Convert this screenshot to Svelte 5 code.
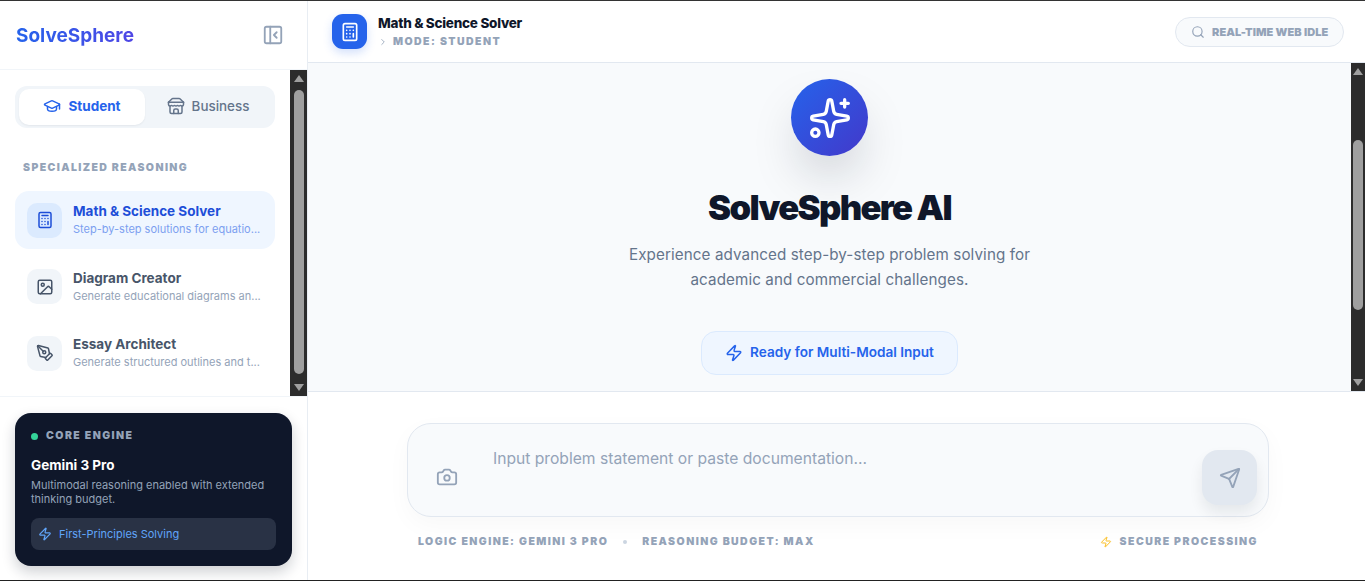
<script>
    const tools = [
        { name: "Math & Science Solver", desc: "Step-by-step solutions for equatio...", icon: "calc", active: true },
        { name: "Diagram Creator", desc: "Generate educational diagrams an...", icon: "image" },
        { name: "Essay Architect", desc: "Generate structured outlines and t...", icon: "pen" }
    ];
</script>

{#snippet calc()}
    <rect x="4" y="2" width="16" height="20" rx="2" />
    <path d="M8 6h8M16 14v4M16 10h.01M12 10h.01M8 10h.01M12 14h.01M8 14h.01M12 18h.01M8 18h.01" />
{/snippet}

{#snippet zap()}
    <path d="M4 14a1 1 0 0 1-.78-1.63l9.9-10.2a.5.5 0 0 1 .86.46l-1.92 6.02A1 1 0 0 0 13 10h7a1 1 0 0 1 .78 1.63l-9.9 10.2a.5.5 0 0 1-.86-.46l1.92-6.02A1 1 0 0 0 11 14z" />
{/snippet}

<div class="shell">
    <aside class="sidebar">
        <div class="brand">
            <span class="logo">SolveSphere</span>
            <svg class="ico collapse" viewBox="0 0 24 24">
                <rect x="3" y="3" width="18" height="18" rx="2" />
                <path d="M9 3v18M16 15l-3-3 3-3" />
            </svg>
        </div>

        <div class="nav-wrap">
            <nav class="nav">
                <div class="switch">
                    <button class="tab on">
                        <svg class="ico s18" viewBox="0 0 24 24">
                            <path d="M21.42 10.922a1 1 0 0 0-.019-1.838L12.83 5.18a2 2 0 0 0-1.66 0L2.6 9.08a1 1 0 0 0 0 1.832l8.57 3.908a2 2 0 0 0 1.66 0z" />
                            <path d="M22 10v6M6 12.5V16a6 3 0 0 0 12 0v-3.5" />
                        </svg>
                        Student
                    </button>
                    <button class="tab">
                        <svg class="ico s18" viewBox="0 0 24 24">
                            <path d="m2 7 4.41-4.41A2 2 0 0 1 7.83 2h8.34a2 2 0 0 1 1.42.59L22 7" />
                            <path d="M4 12v8a2 2 0 0 0 2 2h12a2 2 0 0 0 2-2v-8" />
                            <path d="M15 22v-4a2 2 0 0 0-2-2h-2a2 2 0 0 0-2 2v4" />
                            <path d="M2 7h20" />
                            <path d="M22 7v3a2 2 0 0 1-2 2a2.7 2.7 0 0 1-1.59-.63.7.7 0 0 0-.82 0A2.7 2.7 0 0 1 16 12a2.7 2.7 0 0 1-1.59-.63.7.7 0 0 0-.82 0A2.7 2.7 0 0 1 12 12a2.7 2.7 0 0 1-1.59-.63.7.7 0 0 0-.82 0A2.7 2.7 0 0 1 8 12a2.7 2.7 0 0 1-1.59-.63.7.7 0 0 0-.82 0A2.7 2.7 0 0 1 4 12a2 2 0 0 1-2-2V7" />
                        </svg>
                        Business
                    </button>
                </div>

                <h3 class="section">SPECIALIZED REASONING</h3>

                <ul class="tools">
                    {#each tools as t}
                        <li class="tool" class:active={t.active}>
                            <span class="tool-icon">
                                <svg class="ico s18" viewBox="0 0 24 24">
                                    {#if t.icon === "calc"}
                                        {@render calc()}
                                    {:else if t.icon === "image"}
                                        <rect x="3" y="3" width="18" height="18" rx="2" />
                                        <circle cx="9" cy="9" r="2" />
                                        <path d="m21 15-3.086-3.086a2 2 0 0 0-2.828 0L6 21" />
                                    {:else}
                                        <path d="M15.707 21.293a1 1 0 0 1-1.414 0l-1.586-1.586a1 1 0 0 1 0-1.414l5.586-5.586a1 1 0 0 1 1.414 0l1.586 1.586a1 1 0 0 1 0 1.414z" />
                                        <path d="m18 13-1.375-6.874a1 1 0 0 0-.746-.776L3.235 2.028a1 1 0 0 0-1.207 1.207L5.35 15.879a1 1 0 0 0 .776.746L13 18" />
                                        <path d="m2.3 2.3 7.286 7.286" />
                                        <circle cx="11" cy="11" r="2" />
                                    {/if}
                                </svg>
                            </span>
                            <span class="tool-text">
                                <b>{t.name}</b>
                                <small>{t.desc}</small>
                            </span>
                        </li>
                    {/each}
                </ul>
            </nav>

            <div class="scrollbar side-bar">
                <i class="arrow up"></i>
                <span class="track"><span class="thumb"></span></span>
                <i class="arrow down"></i>
            </div>
        </div>

        <div class="engine-wrap">
            <div class="engine">
                <div class="engine-head"><i class="dot"></i>CORE ENGINE</div>
                <div class="engine-name">Gemini 3 Pro</div>
                <p>Multimodal reasoning enabled with extended thinking budget.</p>
                <div class="engine-chip">
                    <svg class="ico s14" viewBox="0 0 24 24">{@render zap()}</svg>
                    First-Principles Solving
                </div>
            </div>
        </div>
    </aside>

    <main class="main">
        <header class="top">
            <div class="top-left">
                <span class="top-icon">
                    <svg class="ico s20" viewBox="0 0 24 24">{@render calc()}</svg>
                </span>
                <div class="top-text">
                    <div class="top-title">Math &amp; Science Solver</div>
                    <div class="top-mode">
                        <svg class="ico s10" viewBox="0 0 24 24"><path d="m9 18 6-6-6-6" /></svg>
                        MODE: STUDENT
                    </div>
                </div>
            </div>
            <div class="pill">
                <svg class="ico s14" viewBox="0 0 24 24">
                    <path d="m21 21-4.34-4.34" />
                    <circle cx="11" cy="11" r="8" />
                </svg>
                <span>REAL-TIME WEB IDLE</span>
            </div>
        </header>

        <div class="stage">
            <section class="hero">
                <div class="orb">
                    <svg class="ico" viewBox="0 0 24 24">
                        <path d="M11.017 2.814a1 1 0 0 1 1.966 0l1.051 5.558a2 2 0 0 0 1.594 1.594l5.558 1.051a1 1 0 0 1 0 1.966l-5.558 1.051a2 2 0 0 0-1.594 1.594l-1.051 5.558a1 1 0 0 1-1.966 0l-1.051-5.558a2 2 0 0 0-1.594-1.594l-5.558-1.051a1 1 0 0 1 0-1.966l5.558-1.051a2 2 0 0 0 1.594-1.594z" />
                        <path d="M20 2v4M22 4h-4" />
                        <circle cx="4" cy="20" r="2" />
                    </svg>
                </div>
                <h1>SolveSphere AI</h1>
                <p class="lead">Experience advanced step-by-step problem solving for academic and commercial challenges.</p>
                <div class="ready">
                    <svg class="ico s18" viewBox="0 0 24 24">{@render zap()}</svg>
                    <span>Ready for Multi-Modal Input</span>
                </div>
            </section>

            <div class="scrollbar main-bar">
                <i class="arrow up"></i>
                <span class="track"><span class="thumb"></span></span>
                <i class="arrow down"></i>
            </div>
        </div>

        <footer class="composer">
            <div class="box">
                <svg class="ico camera" viewBox="0 0 24 24">
                    <path d="M13.997 4a2 2 0 0 1 1.76 1.05l.486.9A2 2 0 0 0 18.003 7H20a2 2 0 0 1 2 2v9a2 2 0 0 1-2 2H4a2 2 0 0 1-2-2V9a2 2 0 0 1 2-2h1.997a2 2 0 0 0 1.759-1.048l.489-.904A2 2 0 0 1 10.004 4z" />
                    <circle cx="12" cy="13" r="3" />
                </svg>
                <div class="placeholder">Input problem statement or paste documentation...</div>
                <button class="send" aria-label="Send">
                    <svg class="ico s22" viewBox="0 0 24 24">
                        <path d="M14.536 21.686a.5.5 0 0 0 .937-.024l6.5-19a.496.496 0 0 0-.635-.635l-19 6.5a.5.5 0 0 0-.024.937l7.93 3.18a2 2 0 0 1 1.112 1.11z" />
                        <path d="m21.854 2.147-10.94 10.939" />
                    </svg>
                </button>
            </div>
            <div class="meta">
                <div class="meta-left">
                    <span>LOGIC ENGINE: GEMINI 3 PRO</span>
                    <i class="sep"></i>
                    <span>REASONING BUDGET: MAX</span>
                </div>
                <div class="meta-right">
                    <svg class="ico s12" viewBox="0 0 24 24">{@render zap()}</svg>
                    <span>SECURE PROCESSING</span>
                </div>
            </div>
        </footer>
    </main>
</div>

<style>
    :global(body) {
        margin: 0;
        overflow: hidden;
    }

    .shell {
        display: flex;
        box-sizing: border-box;
        width: 1365px;
        height: 581px;
        border-top: 1px solid #333;
        border-bottom: 1px solid #222;
        background: #fff;
        font-family: Inter, "Liberation Sans", sans-serif;
        overflow: hidden;
    }

    .ico {
        flex: none;
        fill: none;
        stroke: currentColor;
        stroke-width: 2;
        stroke-linecap: round;
        stroke-linejoin: round;
    }
    .s10 { width: 10px; height: 10px; }
    .s12 { width: 12px; height: 12px; }
    .s14 { width: 14px; height: 14px; }
    .s18 { width: 18px; height: 18px; }
    .s20 { width: 20px; height: 20px; }
    .s22 { width: 22px; height: 22px; }

    /* sidebar */
    .sidebar {
        flex: none;
        display: flex;
        flex-direction: column;
        width: 308px;
        box-sizing: border-box;
        border-right: 1px solid #e8edf3;
    }

    .brand {
        flex: none;
        display: flex;
        align-items: center;
        justify-content: space-between;
        box-sizing: border-box;
        height: 69px;
        padding: 0 23px 0 16px;
        border-bottom: 1px solid #f1f5f9;
    }

    .logo {
        font-size: 19px;
        font-weight: 700;
        background: linear-gradient(90deg, #2563eb, #4f46e5);
        background-clip: text;
        -webkit-background-clip: text;
        color: transparent;
    }

    .collapse {
        width: 22px;
        height: 22px;
        color: #94a3b8;
    }

    .nav-wrap {
        flex: none;
        display: flex;
        height: 327px;
        overflow: hidden;
        border-bottom: 1px solid #f1f5f9;
        box-sizing: border-box;
    }

    .nav {
        flex: 1;
        min-width: 0;
        padding: 16px 15px 0;
    }

    .switch {
        display: flex;
        box-sizing: border-box;
        height: 42px;
        padding: 3px 4px;
        border-radius: 12px;
        background: #f1f5f9;
    }

    .tab {
        flex: 1;
        display: flex;
        align-items: center;
        justify-content: center;
        gap: 7px;
        padding: 0 0 2px;
        border: 0;
        border-radius: 10px;
        background: transparent;
        color: #64748b;
        font: 500 13.4px Inter, sans-serif;
    }

    .tab.on {
        flex: none;
        width: 126px;
        background: #fff;
        color: #2563eb;
        font-size: 13.5px;
        font-weight: 700;
        box-shadow: 0 1px 2px rgba(15, 23, 42, 0.06);
    }

    .section {
        margin: 33px 0 17px 8px;
        color: #94a3b8;
        font-size: 10.5px;
        line-height: 14px;
        font-weight: 900;
        letter-spacing: 1.4px;
    }

    .tools {
        list-style: none;
        margin: -1px 0 0;
        padding: 0;
        display: flex;
        flex-direction: column;
        gap: 8.5px;
    }

    .tool {
        display: flex;
        align-items: center;
        gap: 11px;
        box-sizing: border-box;
        height: 58px;
        padding: 0 12px;
        border-radius: 14px;
    }

    .tool.active {
        background: #eff6ff;
    }

    .tool-icon {
        flex: none;
        display: flex;
        align-items: center;
        justify-content: center;
        width: 35px;
        height: 35px;
        border-radius: 10px;
        background: #f1f5f9;
        color: #475569;
    }

    .active .tool-icon {
        background: #dbeafe;
        color: #1d4ed8;
    }

    .tool-text {
        flex: 1;
        min-width: 0;
        display: flex;
        flex-direction: column;
        gap: 2px;
    }

    .tool-text b {
        color: #475569;
        font-size: 13.5px;
        line-height: 17px;
        font-weight: 700;
        white-space: nowrap;
    }

    .tool-text small {
        color: #94a3b8;
        font-size: 11px;
        line-height: 15px;
        white-space: nowrap;
    }

    .active .tool-text b { color: #1d4ed8; }
    .active .tool-text small { color: #7c9ff0; }

    /* fake classic scrollbars */
    .scrollbar {
        flex: none;
        display: flex;
        flex-direction: column;
        align-items: center;
        background: #2c2c2c;
    }

    .side-bar { width: 17px; }
    .main-bar { width: 14px; }

    .track {
        flex: 1;
        display: flex;
        width: 100%;
        justify-content: center;
    }

    .thumb {
        width: 10px;
        border-radius: 5px;
        background: #9f9f9f;
    }

    .side-bar .track { padding: 8px 0 0; }
    .side-bar .thumb { height: 284px; }
    .main-bar .track { padding: 65px 0 0; }
    .main-bar .thumb { height: 170px; }

    .arrow {
        flex: none;
        width: 0;
        height: 0;
        border-left: 5.5px solid transparent;
        border-right: 5.5px solid transparent;
    }

    .arrow.up {
        margin-top: 5px;
        border-bottom: 7px solid #9f9f9f;
    }

    .arrow.down {
        margin-bottom: 5px;
        border-top: 7px solid #9f9f9f;
    }

    /* engine card */
    .engine-wrap {
        flex: 1;
        padding: 16px 15px 0;
    }

    .engine {
        box-sizing: border-box;
        width: 277px;
        height: 153px;
        padding: 16px;
        border-radius: 16px;
        background: #0f172a;
        box-shadow: 0 6px 14px rgba(15, 23, 42, 0.2);
    }

    .engine-head {
        display: flex;
        align-items: center;
        gap: 8px;
        color: #94a3b8;
        font-size: 10.5px;
        line-height: 14px;
        font-weight: 900;
        letter-spacing: 1.45px;
        padding-top: 0;
    }

    .dot {
        width: 7px;
        height: 7px;
        border-radius: 50%;
        background: #34d399;
    }

    .engine-name {
        margin-top: 13px;
        color: #fff;
        font-size: 13.5px;
        line-height: 18px;
        font-weight: 700;
    }

    .engine p {
        margin: 4px 0 0;
        color: #94a3b8;
        font-size: 11px;
        line-height: 14px;
    }

    .engine-chip {
        display: flex;
        align-items: center;
        gap: 7px;
        box-sizing: border-box;
        height: 32px;
        margin-top: 12px;
        padding: 0 7px;
        border-radius: 8px;
        background: #293245;
        color: #60a5fa;
        font-size: 11px;
    }

    /* main */
    .main {
        flex: 1;
        min-width: 0;
        display: flex;
        flex-direction: column;
    }

    .top {
        flex: none;
        display: flex;
        align-items: center;
        justify-content: space-between;
        box-sizing: border-box;
        height: 62px;
        padding: 0 21px 0 24px;
        border-bottom: 1px solid #e2e8f0;
    }

    .top-left {
        display: flex;
        align-items: center;
        gap: 11px;
    }

    .top-icon {
        display: flex;
        align-items: center;
        justify-content: center;
        width: 35px;
        height: 35px;
        border-radius: 11px;
        background: #2563eb;
        color: #fff;
        box-shadow: 0 4px 10px rgba(37, 99, 235, 0.2);
    }

    .top-title {
        color: #0f172a;
        font-size: 13.5px;
        line-height: 18px;
        font-weight: 800;
        letter-spacing: -0.25px;
        margin-top: -1px;
    }

    .top-mode {
        display: flex;
        align-items: center;
        gap: 5px;
        margin-top: 3px;
        color: #94a3b8;
        font-size: 10.5px;
        line-height: 14px;
        font-weight: 900;
        letter-spacing: 1.45px;
    }

    .pill {
        display: flex;
        align-items: center;
        gap: 7px;
        box-sizing: border-box;
        width: 169px;
        height: 30px;
        padding: 0 15px;
        border: 1px solid #e2e8f0;
        border-radius: 15px;
        background: #f8fafc;
        color: #94a3b8;
        font-size: 11px;
        font-weight: 900;
        letter-spacing: 0.05px;
        white-space: nowrap;
    }

    .pill span {
        padding-top: 1px;
    }

    .stage {
        flex: none;
        display: flex;
        height: 329px;
        box-sizing: border-box;
        overflow: hidden;
        border-bottom: 1px solid #e2e8f0;
        background: #f8fafc;
    }

    .hero {
        flex: 1;
        min-width: 0;
        display: flex;
        flex-direction: column;
        align-items: center;
        padding-top: 16px;
    }

    .orb {
        flex: none;
        display: flex;
        align-items: center;
        justify-content: center;
        width: 77px;
        height: 77px;
        border-radius: 50%;
        background: linear-gradient(135deg, #2563eb, #4338ca);
        color: #fff;
        box-shadow: 0 25px 50px -12px rgba(15, 23, 42, 0.25);
    }

    .orb svg {
        width: 44px;
        height: 44px;
        stroke-width: 1.8;
    }

    h1 {
        margin: 28px 0 0;
        color: #0f172a;
        font-size: 34.7px;
        line-height: 46px;
        font-weight: 900;
        letter-spacing: -1.7px;
    }

    .lead {
        width: 440px;
        margin: 12px 0 0;
        color: #64748b;
        font-size: 15.2px;
        line-height: 25px;
        text-align: center;
        letter-spacing: 0.1px;
    }

    .ready {
        flex: none;
        display: flex;
        align-items: center;
        justify-content: center;
        gap: 7px;
        box-sizing: border-box;
        width: 257px;
        height: 44px;
        margin-top: 39px;
        border: 1px solid #dbeafe;
        border-radius: 15px;
        background: #eff6ff;
        color: #2563eb;
        font-size: 13.6px;
        font-weight: 600;
    }

    .ready span {
        padding-bottom: 2px;
    }

    .composer {
        flex: 1;
        padding: 31px 96px 0 99px;
    }

    .box {
        display: flex;
        align-items: flex-start;
        box-sizing: border-box;
        height: 94px;
        padding: 0 11px 0 28px;
        border: 1px solid #e2e8f0;
        border-radius: 24px;
        background: #f8fafc;
        box-shadow: 0 8px 24px rgba(15, 23, 42, 0.03);
    }

    .camera {
        width: 22px;
        height: 22px;
        margin-top: 42px;
        color: #94a3b8;
    }

    .placeholder {
        flex: 1;
        margin: 25px 0 0 35px;
        color: #94a3b8;
        font-size: 15.65px;
        line-height: 20px;
    }

    .send {
        display: flex;
        align-items: center;
        justify-content: center;
        width: 55px;
        height: 55px;
        margin-top: 26px;
        padding: 0;
        border: 0;
        border-radius: 16px;
        background: #e2e8f0;
        color: #94a3b8;
        box-shadow: 0 8px 14px rgba(15, 23, 42, 0.08);
    }

    .meta {
        display: flex;
        align-items: center;
        justify-content: space-between;
        margin-top: 18px;
        padding: 0 11px;
        color: #94a3b8;
        font-size: 10.5px;
        line-height: 14px;
        font-weight: 900;
        letter-spacing: 1.45px;
    }

    .meta-left,
    .meta-right {
        display: flex;
        align-items: center;
    }

    .sep {
        width: 4px;
        height: 4px;
        margin: 0 15px;
        border-radius: 50%;
        background: #cbd5e1;
    }

    .meta-right {
        gap: 8px;
    }

    .meta-right svg {
        color: #fbbf24;
    }
</style>
